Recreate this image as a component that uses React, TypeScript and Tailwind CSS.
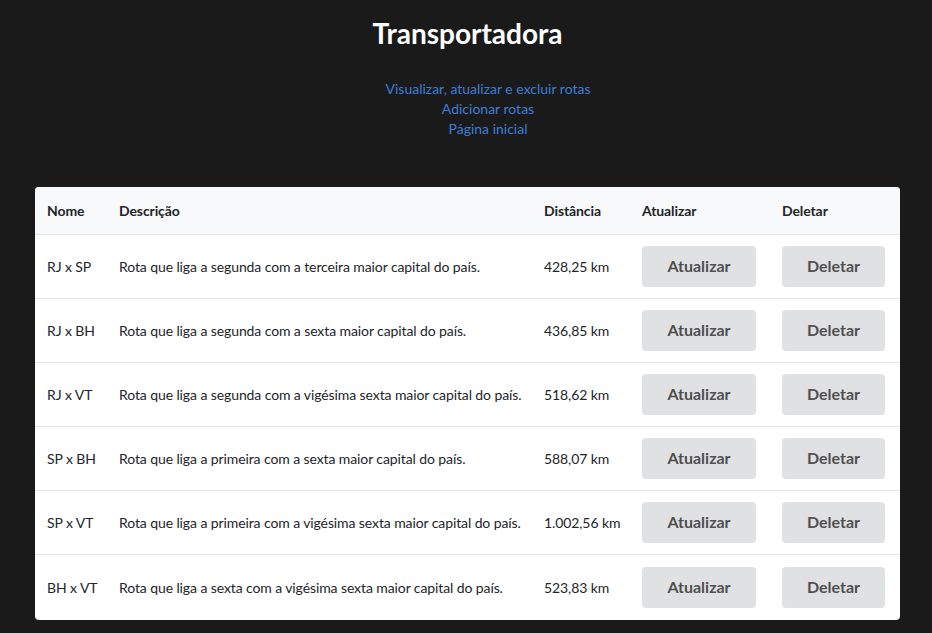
const rotas = [
  { nome: 'RJ x SP', descricao: 'Rota que liga a segunda com a terceira maior capital do país.', distancia: '428,25 km' },
  { nome: 'RJ x BH', descricao: 'Rota que liga a segunda com a sexta maior capital do país.', distancia: '436,85 km' },
  { nome: 'RJ x VT', descricao: 'Rota que liga a segunda com a vigésima sexta maior capital do país.', distancia: '518,62 km' },
  { nome: 'SP x BH', descricao: 'Rota que liga a primeira com a sexta maior capital do país.', distancia: '588,07 km' },
  { nome: 'SP x VT', descricao: 'Rota que liga a primeira com a vigésima sexta maior capital do país.', distancia: '1.002,56 km' },
  { nome: 'BH x VT', descricao: 'Rota que liga a sexta com a vigésima sexta maior capital do país.', distancia: '523,83 km' },
];

export default function App() {
  return (
    <div className="min-h-[633px] bg-[#1a1a1a] font-['Lato','Liberation_Sans',sans-serif] pb-[14px]">
      <h1 className="pt-[16px] pl-[3px] text-center text-[28px] font-bold leading-[34px] text-white">
        Transportadora
      </h1>

      <ul className="mt-[29px] flex flex-col items-center pl-[44px] text-[14px] leading-[20px] text-[#3c7fd6]">
        <li><a href="#">Visualizar, atualizar e excluir rotas</a></li>
        <li><a href="#">Adicionar rotas</a></li>
        <li><a href="#">Página inicial</a></li>
      </ul>

      <div className="ml-[35px] mt-[48px] w-[865px] overflow-hidden rounded-[4px] bg-white">
        <table className="w-full table-fixed border-collapse text-left text-[14px] tracking-[-0.1px] text-[#212529]">
          <colgroup>
            <col className="w-[72px]" />
            <col className="w-[425px]" />
            <col className="w-[98px]" />
            <col className="w-[140px]" />
            <col className="w-[130px]" />
          </colgroup>
          <thead>
            <tr className="h-[47px] border-b border-[#e3e5e8] bg-[#f8f9fa]">
              <th className="px-[12px] font-bold">Nome</th>
              <th className="px-[12px] font-bold">Descrição</th>
              <th className="px-[12px] font-bold">Distância</th>
              <th className="px-[12px] font-bold">Atualizar</th>
              <th className="px-[12px] font-bold">Deletar</th>
            </tr>
          </thead>
          <tbody>
            {rotas.map((rota, i) => (
              <tr
                key={rota.nome}
                className={i < rotas.length - 1 ? 'h-[64px] border-b border-[#e3e5e8]' : 'h-[66px]'}
              >
                <td className="px-[12px] whitespace-nowrap">{rota.nome}</td>
                <td className="px-[12px] whitespace-nowrap">{rota.descricao}</td>
                <td className="px-[12px] whitespace-nowrap">{rota.distancia}</td>
                <td className="px-[12px]">
                  <button className="h-[41px] w-[114px] rounded-[4px] bg-[#e0e1e3] text-[16px] font-bold tracking-normal text-[#505050]">
                    Atualizar
                  </button>
                </td>
                <td className="px-[12px]">
                  <button className="h-[41px] w-[103px] rounded-[4px] bg-[#e0e1e3] text-[16px] font-bold tracking-normal text-[#505050]">
                    Deletar
                  </button>
                </td>
              </tr>
            ))}
          </tbody>
        </table>
      </div>
    </div>
  );
}
